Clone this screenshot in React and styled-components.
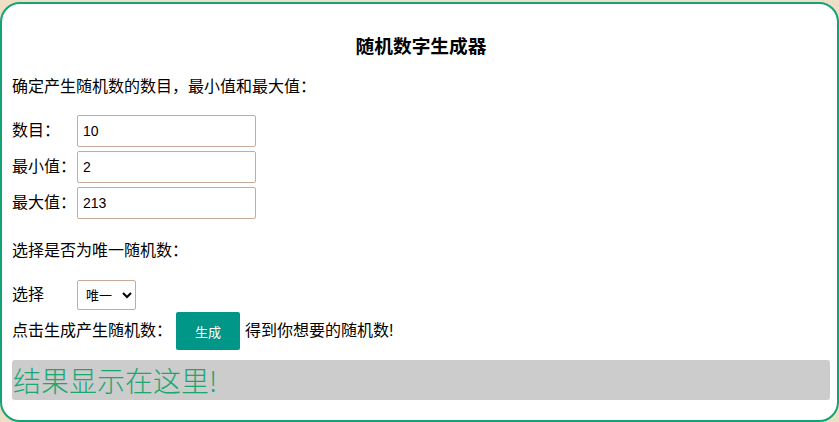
import React from 'react'
import styled, { createGlobalStyle } from 'styled-components'

const Global = createGlobalStyle`
html, body {
  margin: 0;
  padding: 0;
  background: #ecdfc6;
}
body {
  font-family: "Liberation Sans", "Noto Sans CJK SC", sans-serif;
  color: #000;
}
* { box-sizing: border-box; }
`

const Card = styled.div`
margin-top: 2px;
width: 839px;
height: 420px;
background: #fff;
border: 2px solid #14a375;
border-radius: 20px;
padding: 0 7px 0 10px;
display: flex;
flex-direction: column;
`

const Title = styled.h3`
margin: 30px 0 0;
font-size: 18.72px;
line-height: 26px;
font-weight: bold;
text-align: center;
`

const Text = styled.p`
margin: ${props => props.$top || 0}px 0 0;
font-size: 16px;
line-height: 22px;
`

const Fields = styled.div`
margin-top: 17px;
display: flex;
flex-direction: column;
gap: 4px;
`

const Row = styled.div`
display: flex;
align-items: ${props => props.$align || 'center'};
margin-top: ${props => props.$top || 0}px;
font-size: 16px;
line-height: 22px;
`

const Label = styled.span`
display: inline-block;
width: 65px;
`

const Input = styled.input`
width: 179px;
height: 32px;
border: 1px solid #c9ab98;
border-radius: 2px;
padding: 0 5px;
font-family: "Liberation Sans", Arial, sans-serif;
font-size: 14px;
color: #000;
outline: none;
`

const Select = styled.select`
width: 59px;
height: 30px;
border: 1px solid #c9ab98;
border-radius: 2px;
padding: 0 2px 0 4px;
font-family: "Liberation Sans", "Noto Sans CJK SC", sans-serif;
font-size: 13px;
color: #000;
background: #fff;
`

const Button = styled.button`
width: 64px;
height: 38px;
margin: 0 5px 0 4px;
border: none;
border-radius: 2px;
background: #009688;
color: #fff;
font-family: "Noto Sans CJK SC", sans-serif;
font-size: 13px;
cursor: pointer;
`

const Result = styled.div`
margin-top: 10px;
height: 40px;
background: #cccccc;
border-radius: 3px;
padding-left: 1px;
font-family: "Noto Sans CJK SC", sans-serif;
font-weight: 300;
font-size: 28px;
line-height: 40px;
color: #1ea672;
`

export default function App() {
  return (
    <>
      <Global />
      <Card>
        <Title>随机数字生成器</Title>
        <Text $top={16}>确定产生随机数的数目，最小值和最大值：</Text>
        <Fields>
          <Row>
            <Label>数目：</Label>
            <Input defaultValue="10" />
          </Row>
          <Row>
            <Label>最小值：</Label>
            <Input defaultValue="2" />
          </Row>
          <Row>
            <Label>最大值：</Label>
            <Input defaultValue="213" />
          </Row>
        </Fields>
        <Text $top={21}>选择是否为唯一随机数：</Text>
        <Row $top={18} $align="baseline">
          <Label>选择</Label>
          <Select defaultValue="unique">
            <option value="unique">唯一</option>
            <option value="repeat">可重复</option>
          </Select>
        </Row>
        <Row $top={2}>
          <span>点击生成产生随机数：</span>
          <Button>生成</Button>
          <span>得到你想要的随机数!</span>
        </Row>
        <Result>结果显示在这里!</Result>
      </Card>
    </>
  )
}
